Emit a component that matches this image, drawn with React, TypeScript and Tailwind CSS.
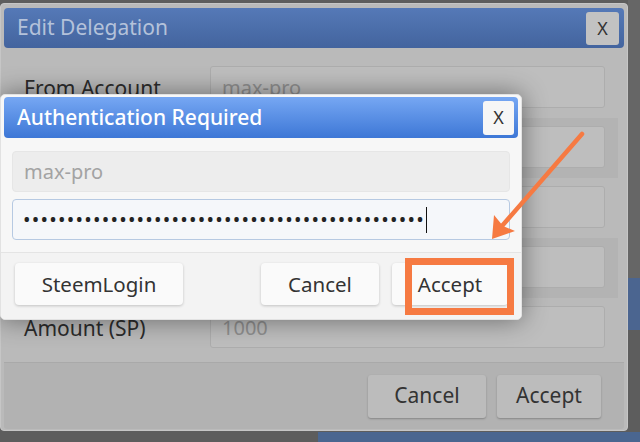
export default function App() {
  const font = { fontFamily: '"Noto Sans", "Open Sans", sans-serif' }
  // rows of the delegation form; labels of rows hidden behind the modal are left out
  const rows = [
    { label: 'From Account', value: 'max-pro', band: false },
    { label: '', value: '', band: true },
    { label: '', value: '', band: false },
    { label: '', value: '', band: true },
    { label: 'Amount (SP)', value: '1000', band: false },
  ]

  return (
    <div className="relative w-[640px] h-[442px] overflow-hidden bg-[#5d5d5d]" style={font}>
      {/* page behind the dialogs */}
      <div className="absolute left-[628px] top-[278px] w-[12px] h-[52px] bg-[#4b6590]" />
      <div className="absolute left-[318px] top-[432px] w-[322px] h-[10px] bg-[#4a6690]" />
      <div className="absolute left-[628px] top-0 w-[12px] h-[278px] bg-[#666]" />

      {/* Edit Delegation dialog (dimmed) */}
      <div className="absolute left-0 top-[3px] w-[628px] h-[428px] rounded-[4px] bg-[#bababa] border border-[#c6c6c6] px-[3px] pt-[4px] flex flex-col">
        <div className="h-[40px] rounded-[4px] bg-gradient-to-b from-[#5579b7] to-[#43649e] flex items-center justify-between pl-[13px] pr-[5px]">
          <span className="text-[21px] text-[#b4c2da]">Edit Delegation</span>
          <div className="w-[33px] h-[33px] rounded-[3px] bg-[#c2c2c2] flex items-center justify-center text-[18px] text-[#333]">X</div>
        </div>
        <div className="mt-[10px] flex flex-col pr-[6px]">
          {rows.map((r, i) => (
            <div key={i} className={`h-[60px] flex items-start pt-[8px] pl-[20px] pr-[13px] ${r.band ? 'bg-[#b3b3b3]' : ''}`}>
              <div className="w-[186px] h-[42px] flex items-center pt-[3px] text-[21px] text-[#2c2c2c]">{r.label}</div>
              <div className="flex-1 h-[42px] rounded-[3px] bg-[#bebebe] border border-[#adadad] flex items-center pt-[2px] px-[11px] text-[20px] text-[#8f8f8f]">
                {r.value}
              </div>
            </div>
          ))}
        </div>
        <div className="mt-auto mb-[1px] h-[67px] border-t border-[#a9a9a9] bg-[#b2b2b2] flex items-center justify-end gap-[11px] pr-[23px] rounded-b-[3px]">
          <div className="w-[118px] h-[43px] rounded-[3px] bg-[#bcbcbc] shadow-[0_1px_2px_rgba(0,0,0,0.25)] flex items-center justify-center text-[21px] text-[#333]">Cancel</div>
          <div className="w-[104px] h-[43px] rounded-[3px] bg-[#bcbcbc] shadow-[0_1px_2px_rgba(0,0,0,0.25)] flex items-center justify-center text-[21px] text-[#333]">Accept</div>
        </div>
      </div>

      {/* Authentication modal */}
      <div className="absolute left-0 top-[94px] w-[522px] h-[226px] rounded-[5px] bg-[#f7f7f7] border border-[#e2e2e2] shadow-[0_0_26px_rgba(0,0,0,0.45)] flex flex-col px-[3px] pt-[2px]">
        <div className="h-[41px] rounded-[4px] bg-gradient-to-b from-[#76a7f3] to-[#3d77d6] flex items-center justify-between pl-[13px] pr-[4px]">
          <span className="text-[21px] font-medium text-white">Authentication Required</span>
          <div className="w-[31px] h-[34px] rounded-[3px] bg-[#f6f6f6] flex items-center justify-center text-[18px] text-[#333]">X</div>
        </div>
        <div className="mt-[13px] mx-[8px] flex flex-col gap-[7px]">
          <div className="h-[41px] rounded-[4px] bg-[#ededed] border border-[#e6e6e6] flex items-center px-[11px] text-[20px] text-[#a3a3a3]">max-pro</div>
          <div className="h-[41px] rounded-[4px] bg-[#f5f7fa] border border-[#b6c9e2] flex items-center px-[10px] text-[20px] text-[#222]">
            <span className="tracking-[1.22px]">{'•'.repeat(46)}</span>
            <span className="ml-[1px] w-px h-[26px] bg-[#111]" />
          </div>
        </div>
        <div className="mt-[12px] flex-1 -mx-[3px] border-t border-[#e4e4e4] bg-[#f3f3f3] rounded-b-[5px] flex items-start pt-[10px] pl-[14px]">
          <div className="w-[168px] h-[42px] rounded-[4px] bg-[#fafafa] shadow-[0_1px_3px_rgba(0,0,0,0.2)] flex items-center justify-center text-[20.5px] text-[#333]">SteemLogin</div>
          <div className="ml-[78px] w-[118px] h-[42px] rounded-[4px] bg-[#fafafa] shadow-[0_1px_3px_rgba(0,0,0,0.2)] flex items-center justify-center text-[20.5px] text-[#333]">Cancel</div>
          <div className="ml-[13px] w-[116px] h-[42px] rounded-[4px] bg-[#fafafa] shadow-[0_1px_3px_rgba(0,0,0,0.2)] flex items-center justify-center text-[20.5px] text-[#333]">Accept</div>
        </div>
      </div>

      {/* annotation: orange box and arrow */}
      <div className="absolute left-[405px] top-[258px] w-[109px] h-[57px] border-[7px] border-[#f67a42]" />
      <svg className="absolute left-0 top-0" width="640" height="442" viewBox="0 0 640 442">
        <line x1="582" y1="134" x2="502" y2="226" stroke="#f67a42" strokeWidth="4.5" strokeLinecap="round" />
        <polygon points="492,239 494,215 503,226 515,231" fill="#f67a42" />
      </svg>
    </div>
  )
}
